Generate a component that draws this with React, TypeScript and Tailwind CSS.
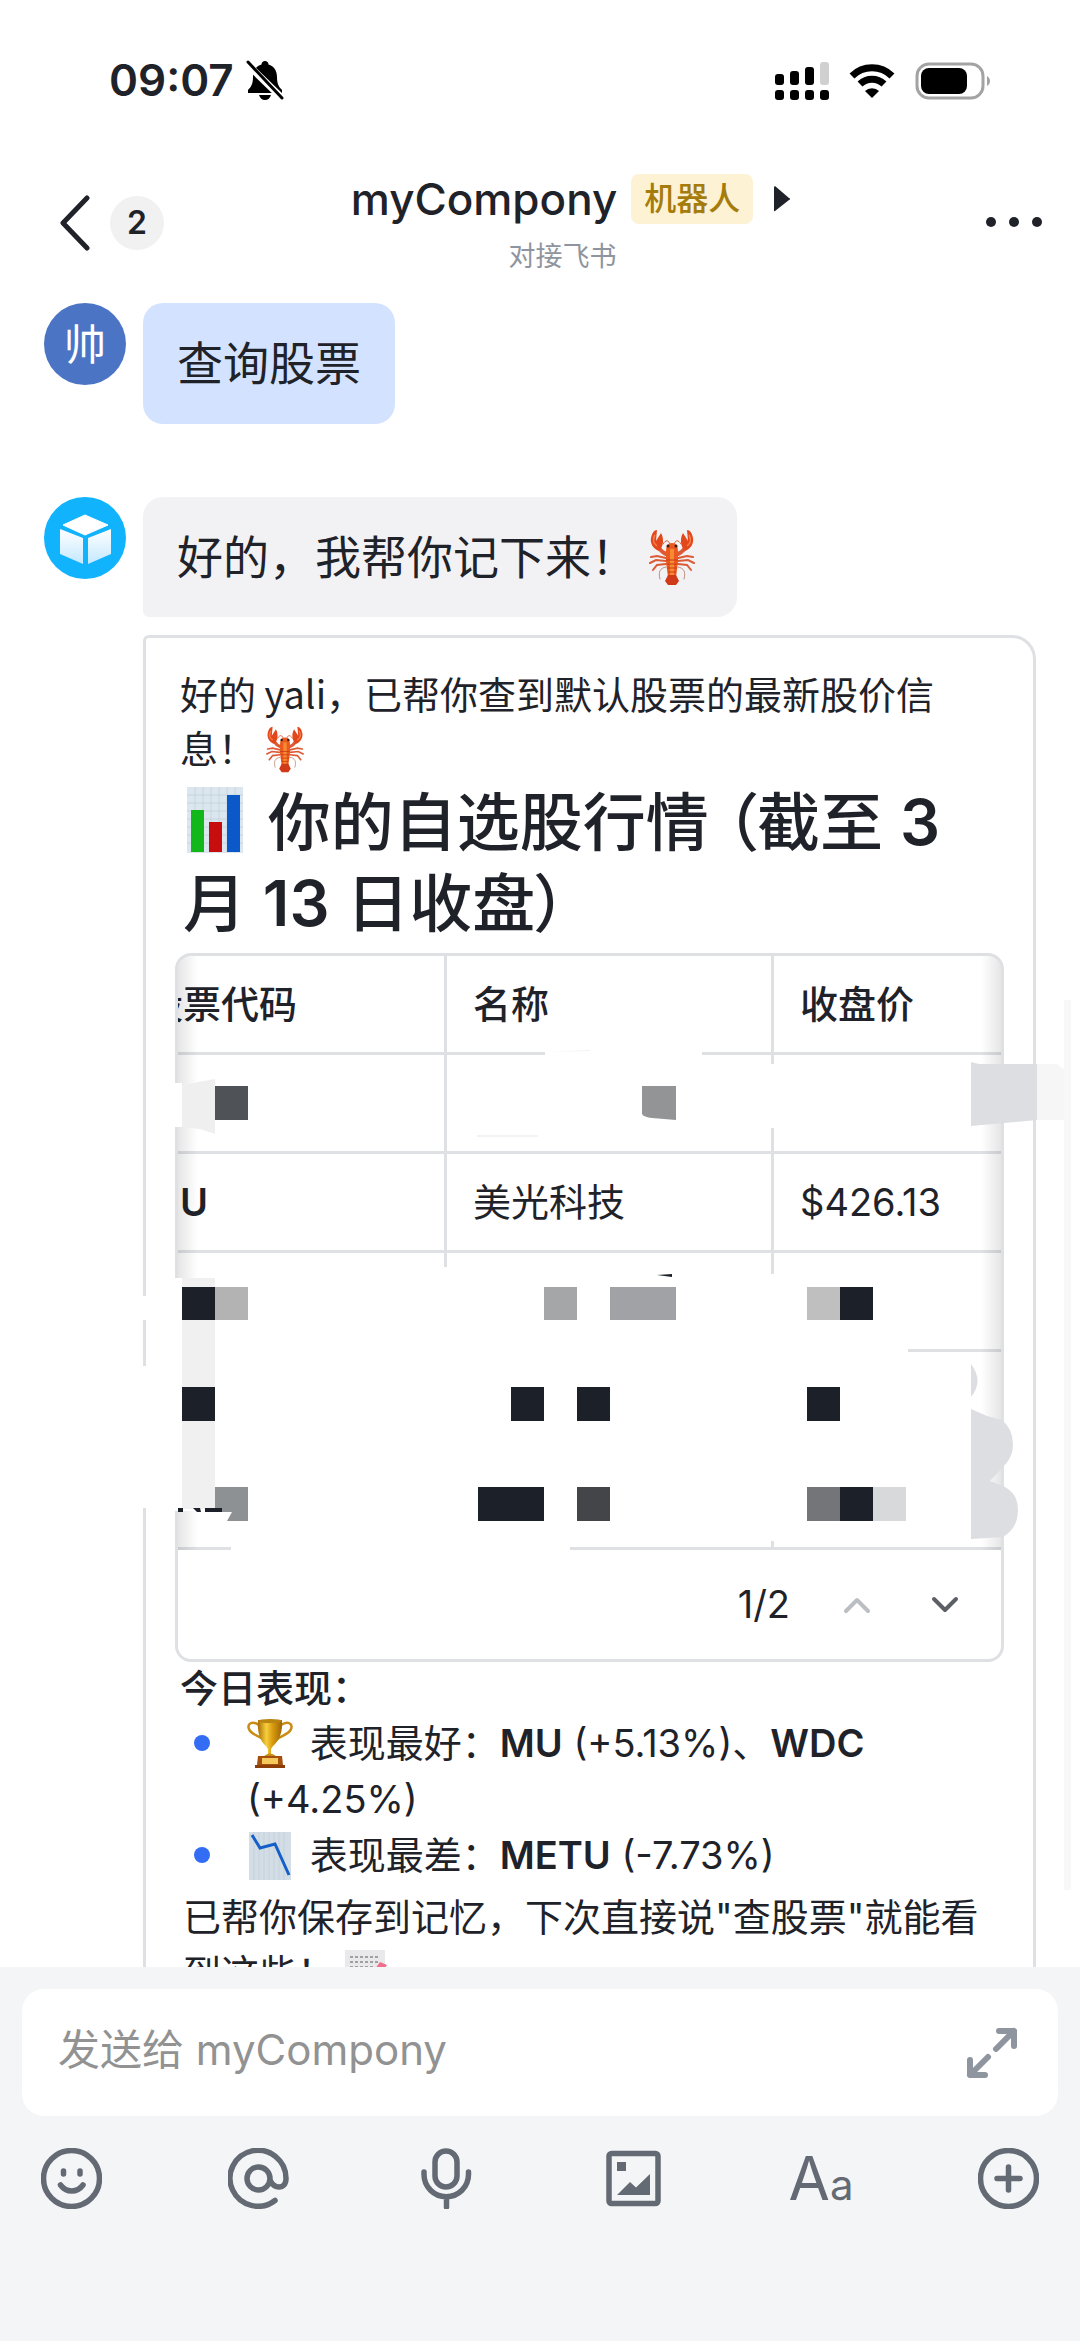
import React, { useState } from 'react';
import clsx from 'clsx';

const rows = [
  { code: '', name: '', price: '' },
  { code: 'MU', name: '美光科技', price: '$426.13' },
  { code: '', name: '', price: '' },
  { code: '', name: '', price: '' },
  { code: '', name: '', price: '' },
];

// Mosaic blocks drawn over the hidden rows: x, y, width, fill
const blocks: [number, number, number, string][] = [
  [215, 1086, 33, '#4f5257'],
  [182, 1287, 33, '#1c2028'],
  [215, 1287, 33, '#b3b3b4'],
  [544, 1287, 33, '#a5a6a7'],
  [610, 1287, 66, '#a1a2a5'],
  [807, 1287, 33, '#bfbfc0'],
  [840, 1287, 33, '#1c2028'],
  [182, 1387, 33, '#1c2028'],
  [511, 1387, 33, '#1c2028'],
  [577, 1387, 33, '#1c2028'],
  [807, 1387, 33, '#1c2028'],
  [478, 1487, 66, '#1c2028'],
  [577, 1487, 33, '#444549'],
  [807, 1487, 33, '#737578'],
  [840, 1487, 33, '#1c2028'],
  [873, 1487, 33, '#d8d9da'],
];

const App: React.FC = () => {
  const [draft, setDraft] = useState('');

  return (
    <div className="flex h-screen flex-col overflow-hidden bg-white font-[Inter,'Noto_Sans_CJK_SC',sans-serif] text-[#1f2329]">
      <StatusBar />
      <Header />

      <main className="flex min-h-0 flex-1 flex-col gap-[73px] overflow-hidden pt-[22px] pr-11 pl-11">
        <section className="flex shrink-0 items-start gap-[17px]">
          <div className="flex size-[82px] shrink-0 items-center justify-center rounded-full bg-[#4c74c4] text-[42px] text-white">帅</div>
          <p className="rounded-[20px] bg-[#d3e3ff] px-[34px] py-[30px] text-[46px] leading-[61px]">查询股票</p>
        </section>

        <section className="flex shrink-0 items-start gap-[17px]">
          <BotAvatar />
          <div className="flex min-w-0 flex-1 flex-col items-start gap-[18px]">
            <p className="flex items-center rounded-[20px] rounded-bl-md bg-[#f2f2f4] py-[30px] pr-[42px] pl-[34px] text-[46px] leading-[60px]">
              好的，我帮你记下来！
              <Lobster className="ml-3 h-[56px] w-[46px]" />
            </p>
            <StockCard />
          </div>
        </section>
      </main>

      <footer className="shrink-0 bg-[#f4f5f7] px-[22px] pt-[22px] pb-[132px]">
        <div className="flex h-[127px] items-center rounded-[22px] bg-white pr-[39px] pl-9">
          <input
            type="text"
            aria-label="发送给 myCompony"
            placeholder="发送给 myCompony"
            value={draft}
            onChange={(e) => setDraft(e.target.value)}
            className="min-w-0 flex-1 bg-transparent pb-1.5 text-[42px] outline-none placeholder:text-[#929292]"
          />
          <button type="button" aria-label="展开">
            <svg viewBox="0 0 54 54" className="size-[54px]" fill="none" stroke="#8f959e" strokeWidth="6" strokeLinecap="round" strokeLinejoin="round">
              <path d="M34 5h15v15M49 5 31 23M20 49H5V34M5 49l18-18" />
            </svg>
          </button>
        </div>
        <div className="mt-8 flex items-center justify-between px-[19px] text-[#646a73]">
          <ToolButton label="表情">
            <circle cx="30.500" cy="30.500" r="28" />
            <path d="M22.500 23v3M39 23v3M19.500 37c6 8 16.500 8 22.500 0" />
          </ToolButton>
          <ToolButton label="提及">
            <circle cx="30.500" cy="30.500" r="11.500" />
            <path d="M47 52.500A28 28 0 1 1 58 30.500c0 6-3 8.500-7 8.500-5 0-7-3-8.500-6" />
          </ToolButton>
          <ToolButton label="语音">
            <rect x="19" y="3" width="22" height="36" rx="11" />
            <path d="M8 24v2.500a22 22 0 0 0 44.500 0V24M30.500 49v10" />
          </ToolButton>
          <ToolButton label="图片">
            <rect x="6" y="5.500" width="49" height="50" rx="2.500" />
            <path d="M14 14h9v9h-9zM14 47l13-13 6 5.500L47 26v21z" fill="currentColor" stroke="none" />
          </ToolButton>
          <button type="button" aria-label="文字格式" className="flex h-[61px] w-[61px] items-baseline justify-center leading-[61px]">
            <span className="text-[60px]">A</span>
            <span className="text-[42px]">a</span>
          </button>
          <ToolButton label="更多">
            <circle cx="30.500" cy="30.500" r="28" />
            <path d="M30.500 19v23M19 30.500h23" />
          </ToolButton>
        </div>
      </footer>
    </div>
  );
};

const StatusBar = () => (
  <div className="flex h-[110px] shrink-0 items-end justify-between pr-[88px] pb-0.5 pl-[109px]">
    <div className="flex items-center gap-3">
      <span className="text-[44px] leading-[56px] font-semibold">09:07</span>
      <svg viewBox="0 0 38 40" className="h-10 w-[38px]" fill="#000">
        <path d="M19 1c2 0 3.500 1.500 3.500 3.500C28 6 31 11 31 17c0 7 2 10 5 13v3H2v-3c3-3 5-6 5-13C7 11 10 6 15.500 4.500 15.500 2.500 17 1 19 1zM13 35h12c-1 3-3 5-6 5s-5-2-6-5z" />
        <path d="M1 4l35 34" stroke="#fff" strokeWidth="7" />
        <path d="M2 2l34 36" stroke="#000" strokeWidth="3" strokeLinecap="round" />
      </svg>
    </div>
    <div className="flex items-center gap-5 pb-2">
      <svg viewBox="0 0 54 38" className="h-[38px] w-[54px]">
        <rect x="0" y="12" width="9" height="11" rx="3" />
        <rect x="15" y="9" width="9" height="14" rx="3" />
        <rect x="30" y="5" width="9" height="18" rx="3" />
        <rect x="45" y="0" width="9" height="23" rx="3" fill="#d0d0d0" />
        <rect x="0" y="28" width="9" height="10" rx="3" />
        <rect x="15" y="28" width="9" height="10" rx="3" />
        <rect x="30" y="28" width="9" height="10" rx="3" />
        <rect x="45" y="28" width="9" height="10" rx="3" />
      </svg>
      <svg viewBox="0 0 46 34" className="h-[34px] w-[46px]" fill="none" stroke="#000" strokeWidth="7">
        <path d="M3 12a28.500 28.500 0 0 1 40 0" />
        <path d="M11 20a17.500 17.500 0 0 1 24 0" />
        <path d="M23 34l-7-7a10 10 0 0 1 14 0z" fill="#000" stroke="none" />
      </svg>
      <svg viewBox="0 0 77 38" className="h-[38px] w-[77px]">
        <rect x="2" y="2" width="66" height="34" rx="12" fill="none" stroke="#a3a3a3" strokeWidth="3" />
        <rect x="6" y="6" width="46" height="26" rx="8" />
        <path d="M72 14c4 2 4 8 0 10z" fill="#a3a3a3" />
      </svg>
    </div>
  </div>
);

const Header = () => (
  <header className="flex h-[171px] shrink-0 items-start justify-between pr-[37px] pl-[58px]">
    <div className="flex w-[265px] items-center gap-5 pt-[85px]">
      <button type="button" aria-label="返回">
        <svg viewBox="0 0 32 56" className="h-14 w-8" fill="none" stroke="currentColor" strokeWidth="5" strokeLinecap="round" strokeLinejoin="round">
          <path d="M29 3 5 28l24 25" />
        </svg>
      </button>
      <span className="flex size-[54px] items-center justify-center rounded-full bg-[#f1f1f2] text-[32px] font-semibold">2</span>
    </div>
    <div className="flex flex-col items-center pt-[62px]">
      <button type="button" className="flex items-center">
        <span className="text-[44px] leading-[54px] font-medium">myCompony</span>
        <span className="ml-3.5 rounded-lg bg-[#fdf2d3] px-[13px] text-[32px] leading-[50px] font-medium text-[#a57c0b]">机器人</span>
        <svg viewBox="0 0 17 26" className="ml-5 h-[26px] w-[17px]" fill="currentColor">
          <path d="M1 1v24a1 1 0 0 0 1 0l14-11a1 1 0 0 0 0-2L2 0z" />
        </svg>
      </button>
      <span className="mt-[11px] mr-4 text-[27px] leading-[40px] text-[#8f959e]">对接飞书</span>
    </div>
    <div className="flex w-[225px] justify-end pt-[106px]">
      <button type="button" aria-label="更多">
        <svg viewBox="0 0 58 12" className="h-3 w-[58px]" fill="currentColor">
          <circle cx="6" cy="6" r="5" />
          <circle cx="29" cy="6" r="5" />
          <circle cx="52" cy="6" r="5" />
        </svg>
      </button>
    </div>
  </header>
);

const StockCard = () => (
  <article className="relative w-full rounded-tl-md rounded-tr-[24px] border-3 border-b-0 border-[#dee0e3] px-[29px] pt-7 pb-8 text-[38px]">
    <p className="px-[5px] font-['Noto_Sans_CJK_SC',sans-serif] leading-[54px]">
      好的 yali，已帮你查到默认股票的最新股价信息！
      <Lobster className="ml-2.5 inline-block h-[48px] w-[38px] align-[-10px]" />
    </p>
    <h1 className="mt-2 px-2 text-[63px] leading-[81px] font-medium [font-feature-settings:'palt']">
      <BarChart /> 你的自选股行情 （截至 <b className="font-semibold">3</b> 月 <b className="font-semibold">13</b> 日收盘）
    </h1>

    <div className="relative mt-[9px] overflow-hidden rounded-[16px] border-3 border-[#dee0e3]">
      <div className="relative overflow-hidden">
        <table className="-ml-[59px] w-[calc(100%+59px)] table-fixed border-separate border-spacing-0 text-left">
          <colgroup>
            <col className="w-[328px]" />
            <col className="w-[327px]" />
            <col />
          </colgroup>
          <thead>
            <tr className="h-[99px]">
              <Th>股票代码</Th>
              <Th>名称</Th>
              <Th last>收盘价</Th>
            </tr>
          </thead>
          <tbody>
            {rows.map((row, i) => (
              <tr key={i} className="h-[99px]">
                <td className="border-r-3 border-b-3 border-[#dee0e3] px-[26px] font-semibold">{row.code}</td>
                <td className="border-r-3 border-b-3 border-[#dee0e3] px-[26px]">{row.name}</td>
                <td className="border-b-3 border-[#dee0e3] px-[26px]">{row.price}</td>
              </tr>
            ))}
          </tbody>
        </table>
        {/* Scroll shadows */}
        <div className="absolute inset-y-0 left-0 w-5 bg-linear-to-r from-black/10 to-transparent" />
        <div className="absolute inset-y-0 right-0 w-5 bg-linear-to-l from-black/10 to-transparent" />
      </div>
      <div className="flex h-[109px] items-center justify-end gap-[53px] pr-[42px]">
        <span>1/2</span>
        <div className="flex items-center gap-[60px]">
          <button type="button" aria-label="上一页" disabled className="text-[#bbbfc4]">
            <Chevron d="M3 15 14 4l11 11" />
          </button>
          <button type="button" aria-label="下一页" className="text-[#5c6066]">
            <Chevron d="M3 3l11 11L25 3" />
          </button>
        </div>
      </div>
    </div>

    <h2 className="px-[5px] leading-[53px] font-medium">今日表现：</h2>
    <ul className="px-[5px] leading-[56px]">
      <Bullet>
        <Trophy /> 表现最好：<b className="font-semibold">MU</b> (+5.13%)、<b className="font-semibold">WDC</b> (+4.25%)
      </Bullet>
      <Bullet>
        <DownChart /> 表现最差：<b className="font-semibold">METU</b> (-7.73%)
      </Bullet>
    </ul>
    <p className="mt-1.5 px-2 leading-[56px]">
      已帮你保存到记忆，下次直接说"查股票"就能看到这些！
      <Memo />
    </p>

    <Redaction />
  </article>
);

const Th = ({ children, last }: any) => (
  <th className={clsx('border-b-3 border-[#dee0e3] px-[26px] font-medium whitespace-nowrap', !last && 'border-r-3')}>{children}</th>
);

const Bullet = ({ children }: any) => (
  <li className="flex">
    <span className="mt-[20px] mr-[37px] ml-[14px] size-4 shrink-0 rounded-full bg-[#336df4]" />
    <span>{children}</span>
  </li>
);

const Chevron = ({ d }: { d: string }) => (
  <svg viewBox="0 0 28 18" className="h-[18px] w-7" fill="none" stroke="currentColor" strokeWidth="4" strokeLinecap="round" strokeLinejoin="round">
    <path d={d} />
  </svg>
);

const ToolButton = ({ label, children }: any) => (
  <button type="button" aria-label={label}>
    <svg viewBox="0 0 61 61" className="size-[61px]" fill="none" stroke="currentColor" strokeWidth="5.500" strokeLinecap="round" strokeLinejoin="round">
      {children}
    </svg>
  </button>
);

const BotAvatar = () => (
  <svg viewBox="0 0 82 82" className="size-[82px] shrink-0">
    <defs>
      <linearGradient id="cube" x1="0" y1="0" x2="0" y2="1">
        <stop offset="0" stopColor="#fff" />
        <stop offset="1" stopColor="#c4e8ff" />
      </linearGradient>
    </defs>
    <circle cx="41" cy="41" r="41" fill="#12b3fd" />
    <path d="M41 18 64 28 41 38 19 28z" fill="#fff" stroke="#fff" strokeLinejoin="round" />
    <path d="M16 32l23 9v26L16 57zM67 32l-23 9v26l23-10z" fill="url(#cube)" />
  </svg>
);

const Lobster = ({ className }: { className: string }) => (
  <svg viewBox="0 0 46 56" className={className} role="img" aria-label="龙虾">
    <g fill="none" stroke="#dc5a35" strokeWidth="2" strokeLinecap="round">
      <path d="M21 16c-1-5-4-6-7-1M25 16c1-5 4-6 7-1" strokeWidth="1" />
      <path d="M17 29 8 27l-6 1M17 32 7 31l-6 3M17 35l-9 1-4 5M29 29l9-2 6 1M29 32l10-1 6 3M29 35l9 1 4 5" />
      <path d="M17 38c-6 1-8 5-6 12M29 38c6 1 8 5 6 12" stroke="#c08a78" strokeWidth="1" />
      <path d="M17 25c-3-1-5-3-7-6M29 25c3-1 5-3 7-6" strokeWidth="4" />
    </g>
    <path d="M10 22C4 20 1 14 2 9 3 4 5 1 8 1l-1 11 5-8c3 5 3 13-2 18zM36 22c6-2 9-8 8-13-1-5-3-8-6-8l1 11-5-8c-3 5-3 13 2 18z" fill="#e2481c" />
    <path d="M6 6c-3 5-1 9 2 11M40 6c3 5 1 9-2 11" fill="none" stroke="#f6814f" strokeWidth="1.500" />
    <path d="M23 14c5 0 6 4 6 9v10l-2 15h-8l-2-15V23c0-5 1-9 6-9z" fill="#ea5a1e" />
    <path d="M21 20h4v26h-4z" fill="#f88a34" />
    <path d="M17 31h12M18 35h10M18 39h10M19 43h8" stroke="#c93c12" strokeWidth="1" />
    <path d="M19 46h8l3 6-3 4h-8l-3-4z" fill="#d03a18" />
    <circle cx="19" cy="17" r="1.500" fill="#3a1a12" />
    <circle cx="27" cy="17" r="1.500" fill="#3a1a12" />
  </svg>
);

const BarChart = () => (
  <svg viewBox="0 0 56 66" className="mr-2 ml-1 inline-block h-[66px] w-[56px] align-[-8px]" role="img" aria-label="柱状图">
    <rect width="56" height="66" fill="#dbe6ee" />
    <path d="M0 8h56M0 16h56M0 24h56M0 32h56M0 40h56M0 48h56M0 56h56M8 0v66M16 0v66M24 0v66M32 0v66M40 0v66M48 0v66" stroke="#c6d5e0" strokeWidth="1" />
    <rect x="4" y="23" width="13" height="42" fill="#12b81a" />
    <rect x="22" y="35" width="13" height="30" fill="#c70d0d" />
    <rect x="40" y="8" width="13" height="57" fill="#0b58c8" />
  </svg>
);

const Trophy = () => (
  <svg viewBox="0 0 46 50" className="mr-1.5 inline-block h-[50px] w-[46px] align-[-11px]" role="img" aria-label="奖杯">
    <defs>
      <linearGradient id="gold">
        <stop offset="0" stopColor="#a86d04" />
        <stop offset=".35" stopColor="#f7cf3d" />
        <stop offset=".6" stopColor="#d99c10" />
        <stop offset="1" stopColor="#9c6403" />
      </linearGradient>
    </defs>
    <path d="M12 7C5 2 0 6 2 11c2 6 10 6 15 11M34 7c7-5 12-1 10 4-2 6-10 6-15 11" fill="none" stroke="#c98d14" strokeWidth="2.500" />
    <path d="M11 2h24c1 12-3 21-9 26l-2 3v8h-3v-8l-2-3C13 23 10 14 11 2z" fill="url(#gold)" />
    <ellipse cx="23" cy="3" rx="12" ry="2" fill="#b98410" />
    <path d="M17 38q6-5 12 0z" fill="#c98d14" />
    <path d="M11 38h24l1 9H10z" fill="#a5500c" />
    <path d="M15 40h16v6H15z" fill="#f6c95c" />
    <path d="M8 47h30v3H8z" fill="#8d3d07" />
  </svg>
);

const DownChart = () => (
  <svg viewBox="0 0 42 48" className="mr-2 ml-0.5 inline-block h-[48px] w-[42px] align-[-11px]" role="img" aria-label="下跌图">
    <rect width="42" height="48" fill="#d3dde6" />
    <path d="M5 0v48M10 0v48M15 0v48M20 0v48M25 0v48M30 0v48M35 0v48" stroke="#c6d1dc" strokeWidth="1" />
    <path d="M3 3l8 13 15-4 14 31" fill="none" stroke="#1460c8" strokeWidth="3" />
  </svg>
);

const Memo = () => (
  <svg viewBox="0 0 42 48" className="ml-2.5 inline-block h-[48px] w-[42px] align-[-11px]" role="img" aria-label="备忘">
    <rect width="40" height="48" fill="#e9e9ec" />
    <path d="M5 7h30M5 12h28M5 17h24M5 22h24" stroke="#888" strokeWidth="1.500" strokeDasharray="3 2" />
    <path d="M35 12l7 3-5 8-7-4z" fill="#ef6f8c" />
  </svg>
);

// Smudges and mosaic that hide the other holdings
const Redaction = () => (
  <svg viewBox="143 635 937 1300" className="pointer-events-none absolute -top-[3px] -left-[3px] h-[1300px] w-[937px] max-w-none" aria-hidden="true">
    <g fill="#fff">
      <path d="M545 1050h157v6H545zM768 1064h9v64h-9zM172 1083h10v44h-10z" />
      <path d="M141 1296h8v24h-8zM141 1366h8v142h-8z" />
      <path d="M172 1278h50v233h-50zM440 1267h12v277h-12zM768 1274h10v267h-10z" />
      <path d="M215 1345h693v9H215zM215 1444h756v10H215zM231 1543h339v9H231z" />
    </g>
    <path d="M182 1085l33-6v55l-15-5-18-2z" fill="#efefef" />
    <path d="M182 1278h33v231h-33z" fill="#f0f0f0" />
    {blocks.map(([x, y, width, fill]) => (
      <rect key={`${x}-${y}`} x={x} y={y} width={width} height={y === 1287 ? 33 : 34} fill={fill} />
    ))}
    <path d="M642 1086h34v34l-24-2q-8-1-10-4z" fill="#929496" />
    <path d="M215 1487h33v34h-21l5-9h-17z" fill="#8e9193" />
    <path d="M178 1508h5v4h-5zM193 1508h7l1 4h-4zM205 1508h17v4h-17z" fill="#1c2028" />
    <path d="M657 1275l15-1v3z" fill="#1c2028" />
    <path d="M545 1052l45-2v1zM477 1135h61v2h-61z" fill="#f3f3f4" />
    <path d="M1037 1064h20l8 6v50h-28z" fill="#f6f6f7" />
    <path d="M1064 1000h7v890h-7z" fill="#f8f8f9" />
    <g fill="#dddee2">
      <path d="M971 1062l8 2h58v56l-66 6z" />
      <path d="M971 1364q13 17 0 33z" />
      <path d="M971 1409l16 7 15 4q11 9 11 25 0 12-10 22l-13 14 13 5q15 7 15 24 0 18-15 27l-32 2z" />
    </g>
  </svg>
);

export default App;
